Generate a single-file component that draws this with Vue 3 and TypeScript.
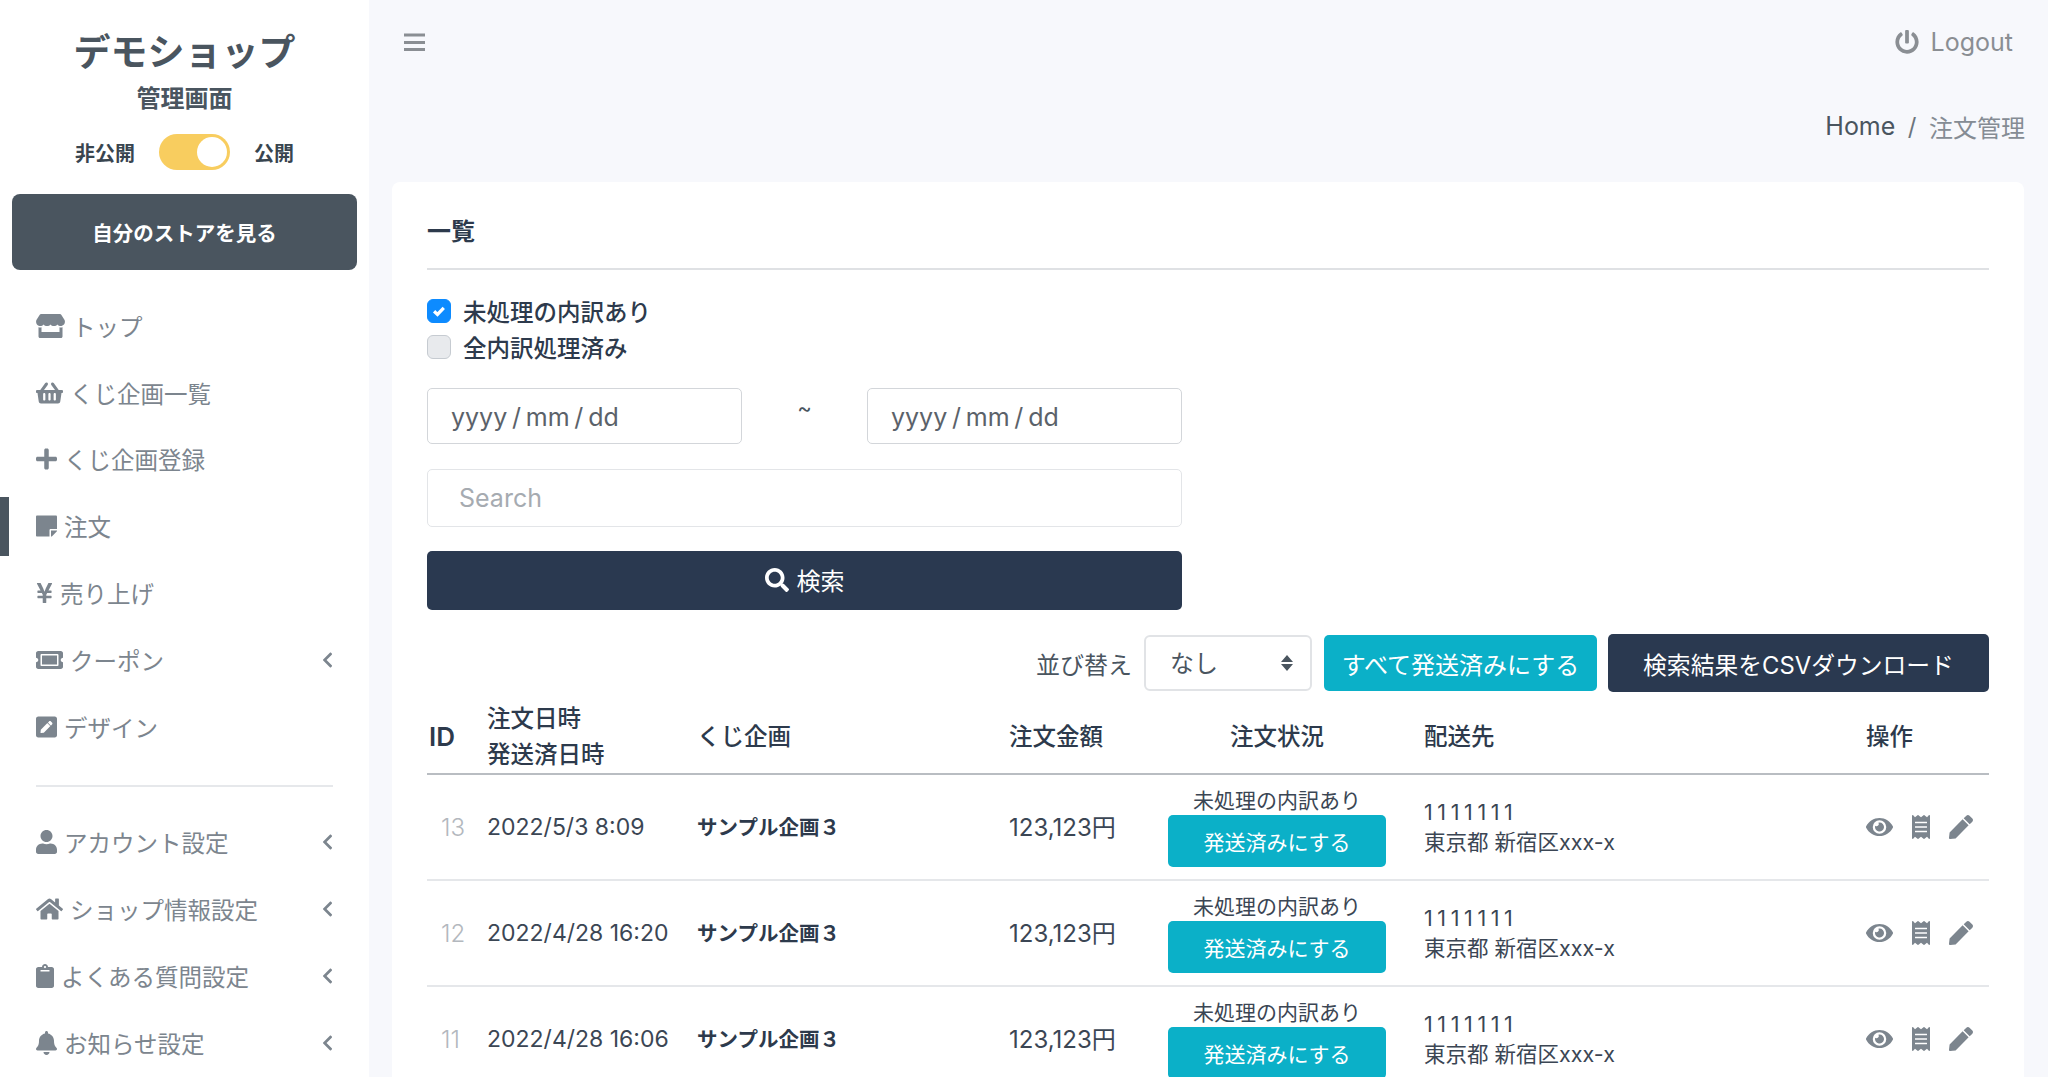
<script setup lang="ts">
interface Icon { vb: string; d: string; w: number }
const ic: Record<string, Icon> = {
  store: { vb: '0 0 616 512', w: 29, d: 'M602 118.6L537.1 15C531.3 5.7 521 0 510 0H106C95 0 84.7 5.7 78.9 15L14 118.6c-33.5 53.5-3.8 127.9 58.8 136.4 4.5.6 9.1.9 13.7.9 29.6 0 55.8-13 73.8-33.1 18 20.1 44.3 33.1 73.8 33.1 29.6 0 55.8-13 73.8-33.1 18 20.1 44.3 33.1 73.8 33.1 29.6 0 55.8-13 73.8-33.1 18.1 20.1 44.3 33.1 73.8 33.1 4.7 0 9.2-.3 13.7-.9 62.8-8.4 92.6-82.8 59-136.4zM529.5 288c-10 0-19.9-1.5-29.5-3.8V384H116v-99.8c-9.6 2.2-19.5 3.8-29.5 3.8-6 0-12.1-.4-18-1.2-5.6-.8-11.1-2.1-16.4-3.6V480c0 17.7 14.3 32 32 32h448c17.7 0 32-14.3 32-32V283.2c-5.4 1.6-10.8 2.9-16.4 3.6-6.1.8-12.1 1.2-18.2 1.2z' },
  basket: { vb: '0 0 576 512', w: 27, d: 'M576 216v16c0 13.255-10.745 24-24 24h-8l-26.113 182.788C514.509 462.435 494.257 480 470.37 480H105.63c-23.887 0-44.139-17.565-47.518-41.212L32 256h-8c-13.255 0-24-10.745-24-24v-16c0-13.255 10.745-24 24-24h67.341l106.78-146.821c10.395-14.292 30.407-17.453 44.701-7.058 14.293 10.395 17.453 30.408 7.058 44.701L170.477 192h235.046L326.12 82.821c-10.395-14.292-7.234-34.306 7.059-44.701 14.291-10.395 34.306-7.235 44.701 7.058L484.659 192H552c13.255 0 24 10.745 24 24zM312 392V280c0-13.255-10.745-24-24-24s-24 10.745-24 24v112c0 13.255 10.745 24 24 24s24-10.745 24-24zm112 0V280c0-13.255-10.745-24-24-24s-24 10.745-24 24v112c0 13.255 10.745 24 24 24s24-10.745 24-24zm-224 0V280c0-13.255-10.745-24-24-24s-24 10.745-24 24v112c0 13.255 10.745 24 24 24s24-10.745 24-24z' },
  plus: { vb: '0 0 448 512', w: 21, d: 'M416 208H272V64c0-17.67-14.33-32-32-32h-32c-17.67 0-32 14.33-32 32v144H32c-17.67 0-32 14.33-32 32v32c0 17.67 14.33 32 32 32h144v144c0 17.67 14.33 32 32 32h32c17.67 0 32-14.33 32-32V304h144c17.67 0 32-14.33 32-32v-32c0-17.67-14.33-32-32-32z' },
  note: { vb: '0 0 448 512', w: 21, d: 'M312 320h136V56c0-13.3-10.7-24-24-24H24C10.7 32 0 42.7 0 56v400c0 13.3 10.7 24 24 24h264V344c0-13.2 10.8-24 24-24zm129 55l-98 98c-4.5 4.5-10.6 7-17 7h-6V352h128v6.1c0 6.3-2.5 12.4-7 16.9z' },
  yen: { vb: '0 0 384 512', w: 17, d: 'M351.2 32h-65.3c-4.6 0-8.8 2.6-10.8 6.7l-55.4 113.2c-14.5 34.7-27.1 71.9-27.1 71.9h-1.3s-12.6-37.2-27.1-71.9L108.8 38.7c-2-4.1-6.2-6.7-10.8-6.7H32.8c-9.1 0-14.8 9.7-10.6 17.6L102.3 200H44c-6.6 0-12 5.4-12 12v32c0 6.6 5.4 12 12 12h88.2l19.8 37.2V320H44c-6.6 0-12 5.4-12 12v32c0 6.6 5.4 12 12 12h108v92c0 6.6 5.4 12 12 12h56c6.6 0 12-5.4 12-12v-92h108c6.6 0 12-5.4 12-12v-32c0-6.6-5.4-12-12-12H232v-26.8l19.8-37.2H340c6.6 0 12-5.4 12-12v-32c0-6.6-5.4-12-12-12h-58.3l80.1-150.4c4.2-7.9-1.5-17.6-10.6-17.6z' },
  ticket: { vb: '0 0 576 512', w: 27, d: 'M128 160h320v192H128V160zm400 96c0 26.51 21.49 48 48 48v96c0 26.51-21.49 48-48 48H48c-26.51 0-48-21.49-48-48v-96c26.51 0 48-21.49 48-48s-21.49-48-48-48v-96c0-26.51 21.49-48 48-48h480c26.51 0 48 21.49 48 48v96c-26.51 0-48 21.49-48 48zm-48-104c0-13.255-10.745-24-24-24H120c-13.255 0-24 10.745-24 24v208c0 13.255 10.745 24 24 24h336c13.255 0 24-10.745 24-24V152z' },
  pensq: { vb: '0 0 448 512', w: 21, d: 'M400 480H48c-26.5 0-48-21.5-48-48V80c0-26.5 21.5-48 48-48h352c26.5 0 48 21.5 48 48v352c0 26.5-21.5 48-48 48zM238.1 177.9L102.4 313.6l-6.3 57.1c-.8 7.6 5.6 14.1 13.3 13.3l57.1-6.3L302.2 242c2.3-2.3 2.3-6.1 0-8.5L246.7 178c-2.5-2.4-6.3-2.4-8.6-.1zM345 165.1L314.9 135c-9.4-9.4-24.6-9.4-33.9 0l-23.1 23.1c-2.3 2.3-2.3 6.1 0 8.5l55.5 55.5c2.3 2.3 6.1 2.3 8.5 0L345 199c9.3-9.3 9.3-24.5 0-33.9z' },
  user: { vb: '0 0 448 512', w: 21, d: 'M224 256c70.7 0 128-57.3 128-128S294.7 0 224 0 96 57.3 96 128s57.3 128 128 128zm89.6 32h-16.7c-22.2 10.2-46.9 16-72.9 16s-50.6-5.8-72.9-16h-16.7C60.2 288 0 348.2 0 422.4V464c0 26.5 21.5 48 48 48h352c26.5 0 48-21.5 48-48v-41.6c0-74.2-60.2-134.4-134.4-134.4z' },
  home: { vb: '0 0 576 512', w: 27, d: 'M280.37 148.26L96 300.11V464a16 16 0 0 0 16 16l112.06-.29a16 16 0 0 0 15.92-16V368a16 16 0 0 1 16-16h64a16 16 0 0 1 16 16v95.64a16 16 0 0 0 16 16.05L464 480a16 16 0 0 0 16-16V300L295.67 148.26a12.19 12.19 0 0 0-15.3 0zM571.6 251.47L488 182.56V44.05a12 12 0 0 0-12-12h-56a12 12 0 0 0-12 12v72.61L318.47 43a48 48 0 0 0-61 0L4.34 251.47a12 12 0 0 0-1.6 16.9l25.5 31A12 12 0 0 0 45.15 301l235.22-193.74a12.19 12.19 0 0 1 15.3 0L530.9 301a12 12 0 0 0 16.9-1.6l25.5-31a12 12 0 0 0-1.7-16.93z' },
  clip: { vb: '0 0 384 512', w: 18, d: 'M384 112v352c0 26.51-21.49 48-48 48H48c-26.51 0-48-21.49-48-48V112c0-26.51 21.49-48 48-48h80c0-35.29 28.71-64 64-64s64 28.71 64 64h80c26.51 0 48 21.49 48 48zM192 40c-13.255 0-24 10.745-24 24s10.745 24 24 24 24-10.745 24-24-10.745-24-24-24m96 114v-20a6 6 0 0 0-6-6H102a6 6 0 0 0-6 6v20a6 6 0 0 0 6 6h180a6 6 0 0 0 6-6z' },
  bell: { vb: '0 0 448 512', w: 21, d: 'M224 512c35.32 0 63.97-28.65 63.97-64H160.03c0 35.35 28.65 64 63.97 64zm215.39-149.71c-19.32-20.76-55.47-51.99-55.47-154.29 0-77.7-54.48-139.9-127.94-155.16V32c0-17.67-14.32-32-31.98-32s-31.98 14.33-31.98 32v20.84C118.56 68.1 64.08 130.3 64.08 208c0 102.3-36.15 133.53-55.47 154.29-6 6.45-8.66 14.16-8.61 21.71.11 16.4 12.98 32 32.1 32h383.8c19.12 0 32-15.6 32.1-32 .05-7.55-2.61-15.27-8.61-21.71z' },
}
const chevron = 'M34.52 239.03L228.87 44.69c9.37-9.37 24.57-9.37 33.94 0l22.67 22.67c9.36 9.36 9.37 24.52.04 33.9L131.49 256l154.02 154.75c9.34 9.38 9.32 24.54-.04 33.9l-22.67 22.67c-9.37 9.37-24.57 9.37-33.94 0L34.52 272.97c-9.37-9.37-9.37-24.57 0-33.94z'
const eye = 'M572.52 241.4C518.29 135.59 410.93 64 288 64S57.68 135.64 3.48 241.41a32.35 32.35 0 0 0 0 29.19C57.71 376.41 165.07 448 288 448s230.32-71.64 284.52-177.41a32.35 32.35 0 0 0 0-29.19zM288 400a144 144 0 1 1 144-144 143.93 143.93 0 0 1-144 144zm0-240a95.31 95.31 0 0 0-25.31 3.79 47.85 47.85 0 0 1-66.9 66.9A95.78 95.78 0 1 0 288 160z'
const receipt = 'M358.4 3.2L320 48 265.6 3.2a15.9 15.9 0 0 0-19.2 0L192 48 137.6 3.2a15.9 15.9 0 0 0-19.2 0L64 48 25.6 3.2C15-4.7 0 2.8 0 16v480c0 13.2 15 20.7 25.6 12.8L64 464l54.4 44.8a15.9 15.9 0 0 0 19.2 0L192 464l54.4 44.8a15.9 15.9 0 0 0 19.2 0L320 464l38.4 44.8c10.5 7.9 25.6.4 25.6-12.8V16c0-13.2-15-20.7-25.6-12.8zM320 360c0 4.4-3.6 8-8 8H72c-4.4 0-8-3.6-8-8v-16c0-4.4 3.6-8 8-8h240c4.4 0 8 3.6 8 8v16zm0-96c0 4.4-3.6 8-8 8H72c-4.4 0-8-3.6-8-8v-16c0-4.4 3.6-8 8-8h240c4.4 0 8 3.6 8 8v16zm0-96c0 4.4-3.6 8-8 8H72c-4.4 0-8-3.6-8-8v-16c0-4.4 3.6-8 8-8h240c4.4 0 8 3.6 8 8v16z'
const pen = 'M290.74 93.24l128.02 128.02-277.99 277.99-114.14 12.6C11.35 513.54-1.56 500.62.14 485.34l12.7-114.22 277.9-278.88zm207.2-19.06l-60.11-60.11c-18.75-18.75-49.16-18.75-67.91 0l-56.55 56.55 128.02 128.02 56.55-56.55c18.75-18.76 18.75-49.16 0-67.91z'
const search = 'M505 442.7L405.3 343c-4.5-4.5-10.6-7-17-7H372c27.6-35.3 44-79.7 44-128C416 93.1 322.9 0 208 0S0 93.1 0 208s93.1 208 208 208c48.3 0 92.7-16.4 128-44v16.3c0 6.4 2.5 12.5 7 17l99.7 99.7c9.4 9.4 24.6 9.4 33.9 0l28.3-28.3c9.4-9.4 9.4-24.6.1-34zM208 336c-70.7 0-128-57.2-128-128 0-70.7 57.2-128 128-128 70.7 0 128 57.2 128 128 0 70.7-57.2 128-128 128z'
const power = 'M400 54.1c63 45 104 118.6 104 201.9 0 136.8-110.8 247.7-247.5 248C120 504.3 8.2 393 8 256.4 7.9 173.1 48.9 99.3 111.8 54.2c11.7-8.3 28-4.8 35 7.7L162.6 90c5.9 10.5 3.1 23.8-6.6 31-41.5 30.8-68 79.6-68 134.9-.1 92.3 74.5 168.1 168 168.1 91.6 0 168.6-74.2 168-169.1-.3-51.8-24.7-101.8-68.1-134-9.7-7.2-12.4-20.5-6.5-30.9l15.8-28.1c7-12.4 23.2-16.1 34.8-7.8zM296 264V24c0-13.3-10.7-24-24-24h-32c-13.3 0-24 10.7-24 24v240c0 13.3 10.7 24 24 24h32c13.3 0 24-10.7 24-24z'

const nav1 = [
  { icon: 'store', label: 'トップ' },
  { icon: 'basket', label: 'くじ企画一覧' },
  { icon: 'plus', label: 'くじ企画登録' },
  { icon: 'note', label: '注文', active: true },
  { icon: 'yen', label: '売り上げ' },
  { icon: 'ticket', label: 'クーポン', more: true },
  { icon: 'pensq', label: 'デザイン' },
]
const nav2 = [
  { icon: 'user', label: 'アカウント設定', more: true },
  { icon: 'home', label: 'ショップ情報設定', more: true },
  { icon: 'clip', label: 'よくある質問設定', more: true },
  { icon: 'bell', label: 'お知らせ設定', more: true },
]
const orders = [
  { id: 13, date: '2022/5/3 8:09' },
  { id: 12, date: '2022/4/28 16:20' },
  { id: 11, date: '2022/4/28 16:06' },
]
</script>

<template>
  <div class="app">
    <aside class="side">
      <div class="brand">デモショップ</div>
      <div class="sub">管理画面</div>
      <div class="pub">
        <span>非公開</span>
        <span class="toggle"><i></i></span>
        <span>公開</span>
      </div>
      <a class="store">自分のストアを見る</a>
      <nav class="nav first">
        <a v-for="n in nav1" :key="n.label" class="item" :class="{ active: n.active }">
          <svg class="ni" :viewBox="ic[n.icon].vb" :width="ic[n.icon].w" height="24"><path :d="ic[n.icon].d" /></svg>
          <span class="lb">{{ n.label }}</span>
          <svg v-if="n.more" class="chev" viewBox="0 0 320 512" width="11" height="18"><path :d="chevron" /></svg>
        </a>
      </nav>
      <hr class="div" />
      <nav class="nav">
        <a v-for="n in nav2" :key="n.label" class="item">
          <svg class="ni" :viewBox="ic[n.icon].vb" :width="ic[n.icon].w" height="24"><path :d="ic[n.icon].d" /></svg>
          <span class="lb">{{ n.label }}</span>
          <svg class="chev" viewBox="0 0 320 512" width="11" height="18"><path :d="chevron" /></svg>
        </a>
      </nav>
    </aside>

    <main class="main">
      <header class="top">
        <svg class="burger" viewBox="0 0 21 18" width="21" height="18"><path d="M0 2h21M0 9.5h21M0 16.5h21" /></svg>
        <a class="logout">
          <svg viewBox="0 0 512 512" width="24" height="24"><path :d="power" /></svg>
          <span>Logout</span>
        </a>
      </header>
      <div class="crumb"><span class="home">Home</span><span class="sl">/</span><span class="cur">注文管理</span></div>

      <section class="card">
        <h2 class="title">一覧</h2>
        <label class="chk"><span class="box on"><svg viewBox="0 0 12 12" width="14" height="14"><path d="M1.8 6.2l2.9 2.7 5.4-5.6" /></svg></span>未処理の内訳あり</label>
        <label class="chk two"><span class="box"></span>全内訳処理済み</label>
        <div class="dates">
          <input class="inp" placeholder="yyyy / mm / dd" />
          <span class="tilde">~</span>
          <input class="inp" placeholder="yyyy / mm / dd" />
        </div>
        <input class="search" placeholder="Search" />
        <button class="go">
          <svg viewBox="0 0 512 512" width="24" height="24"><path :d="search" /></svg>
          検索
        </button>
        <div class="tools">
          <span class="sortl">並び替え</span>
          <div class="sel">
            <select><option>なし</option></select>
            <svg viewBox="0 0 12 16" width="12" height="16"><path d="M6 0l6 7H0zM6 16L0 9h12z" /></svg>
          </div>
          <button class="teal">すべて発送済みにする</button>
          <button class="navy">検索結果をCSVダウンロード</button>
        </div>
        <table class="tbl">
          <colgroup>
            <col class="c1" /><col class="c2" /><col class="c3" /><col class="c4" /><col class="c5" /><col class="c6" /><col class="c7" />
          </colgroup>
          <thead>
            <tr>
              <th>ID</th>
              <th>注文日時<br />発送済日時</th>
              <th>くじ企画</th>
              <th>注文金額</th>
              <th class="ctr">注文状況</th>
              <th class="addrh">配送先</th>
              <th>操作</th>
            </tr>
          </thead>
          <tbody>
            <tr v-for="o in orders" :key="o.id">
              <td class="idc">{{ o.id }}</td>
              <td class="dt">{{ o.date }}</td>
              <td class="kuji">サンプル企画３</td>
              <td class="amt">123,123円</td>
              <td class="ctr status">
                <div class="st">未処理の内訳あり</div>
                <button class="ship">発送済みにする</button>
              </td>
              <td class="addr">
                <div class="zip">1111111</div>
                <div>東京都 新宿区xxx-x</div>
              </td>
              <td>
                <div class="ops">
                  <svg viewBox="0 0 576 512" width="27" height="24"><path :d="eye" /></svg>
                  <svg viewBox="0 0 384 512" width="18" height="24"><path :d="receipt" /></svg>
                  <svg viewBox="0 0 512 512" width="24" height="24"><path :d="pen" /></svg>
                </div>
              </td>
            </tr>
          </tbody>
        </table>
      </section>
    </main>
  </div>
</template>

<style>
html, body { margin: 0; padding: 0; }
</style>

<style scoped>
.app {
  display: flex;
  height: 1077px;
  overflow: hidden;
  background: #f7f8fc;
  font-family: Inter, "Noto Sans CJK JP", sans-serif;
  color: #2d3a4c;
}
.side {
  width: 369px;
  flex: none;
  background: #fff;
  box-sizing: border-box;
  padding-top: 26px;
  overflow: hidden;
}
.brand { text-align: center; font-size: 37px; line-height: 54px; font-weight: 700; color: #4a555f; }
.sub { text-align: center; font-size: 24px; line-height: 34px; margin-top: 2px; font-weight: 700; color: #4a555f; }
.pub {
  display: flex; align-items: center; justify-content: center;
  gap: 24px; margin-top: 18px; font-size: 20px; font-weight: 700; color: #39454f; height: 36px;
}
.toggle { width: 71px; height: 36px; border-radius: 18px; background: #f8cd5f; position: relative; display: block; }
.toggle i { position: absolute; right: 3px; top: 3px; width: 30px; height: 30px; border-radius: 50%; background: #fff; }
.store {
  display: flex; align-items: center; justify-content: center;
  margin: 24px 12px 0 12px; height: 76px; border-radius: 8px; background: #4a555f; color: #fff;
  font-size: 20.5px; font-weight: 700;
}
.nav { display: flex; flex-direction: column; }
.nav.first { margin-top: 22.5px; }
.item {
  position: relative; display: flex; align-items: center; gap: 7px; height: 66.8px;
  padding: 0 36px; font-size: 23.5px; color: #7c858e;
}
.item.active::before {
  content: ""; position: absolute; left: 0; top: 4.5px; width: 9px; height: 59px; background: #4a555f;
}
.ni { fill: #7c858e; flex: none; }
.lb { flex: 1; white-space: nowrap; }
.chev { fill: #7c858e; flex: none; }
.div { border: 0; border-top: 2px solid #e6e8eb; margin: 25px 36px 22px; }

.main { flex: 1; min-width: 0; box-sizing: border-box; padding: 0 24px 0 23px; }
.top { display: flex; align-items: center; justify-content: space-between; height: 84px; padding: 0 11px 0 12px; }
.burger { stroke: #8a8e93; stroke-width: 3.2; fill: none; }
.logout { display: flex; align-items: center; gap: 12px; font-size: 25px; color: #8a8e93; font-weight: 400; }
.logout svg { fill: #8a8e93; }
.crumb { display: flex; justify-content: flex-end; align-items: center; gap: 12.5px; height: 84px; margin-right: -1px; font-size: 24px; }
.home { color: #4a555f; font-size: 25px; }
.sl { color: #6c757d; }
.cur { color: #858c94; }
.card {
  background: #fff; border-radius: 8px; box-sizing: border-box; padding: 0 35px; margin-top: 14px; height: 1100px;
}
.title {
  margin: 0; height: 88px; border-bottom: 2px solid #dfe1e4; box-sizing: border-box; font-size: 24px; font-weight: 700;
  display: flex; align-items: center; padding-top: 9px; color: #2d3a4c;
}
.chk { display: flex; align-items: center; gap: 12px; font-size: 23.5px; font-weight: 500; height: 36px; margin-top: 23px; }
.chk.two { margin-top: 0; }
.box { width: 24px; height: 24px; border-radius: 6px; background: #e8eaed; border: 1.5px solid #c6cbd1; box-sizing: border-box; display: flex; align-items: center; justify-content: center; }
.box.on { background: #0d8bff; border-color: #0d8bff; }
.box svg { fill: none; stroke: #fff; stroke-width: 2.8; }
.dates { display: flex; align-items: center; width: 755px; justify-content: space-between; margin-top: 23px; }
.inp {
  width: 315px; height: 56px; box-sizing: border-box; border: 1px solid #d3d6da; border-radius: 5px;
  padding: 1px 23px 0; font: inherit; font-size: 25px; word-spacing: -2.25px; outline: none; background: #fff;
}
.inp::placeholder { color: #5b626a; opacity: 1; }
.tilde { font-size: 22px; color: #4a555f; margin-top: -16px; }
.search {
  display: block; width: 755px; height: 58px; box-sizing: border-box; margin-top: 25px; border: 1px solid #e3e5e8; border-radius: 5px;
  padding: 0 31px; font: inherit; font-size: 25px; outline: none;
}
.search::placeholder { color: #a6abb1; opacity: 1; }
.go {
  display: flex; align-items: center; justify-content: center; gap: 8px; width: 755px; height: 59px; margin-top: 24px; padding: 0 0 2px;
  border: 0; border-radius: 5px; background: #2a3950; color: #fff; font: inherit; font-size: 24px;
}
.go svg { fill: #fff; }
.tools { display: flex; align-items: center; justify-content: flex-end; margin-top: 24px; height: 58px; }
.sortl { font-size: 24px; color: #4a555f; margin-right: 12px; }
.sel { position: relative; width: 168px; height: 56px; margin-right: 12px; }
.sel select {
  appearance: none; width: 100%; height: 100%; box-sizing: border-box; border: 2px solid #e1e3e6; border-radius: 6px;
  padding: 0 24px; font: inherit; font-size: 24px; color: #4a555f; background: #fff; outline: none;
}
.sel svg { position: absolute; right: 19px; top: 20px; fill: #4a555f; }
.teal, .navy, .ship { border: 0; color: #fff; font: inherit; padding: 0; }
.teal { width: 273px; height: 56px; background: #0bb0c8; border-radius: 5px; font-size: 24px; margin-right: 11px; }
.navy { width: 381px; height: 58px; background: #2a3950; border-radius: 5px; font-size: 23.8px; }
.tbl { width: 100%; border-collapse: collapse; table-layout: fixed; margin-top: 6px; }
.c1 { width: 60px; } .c2 { width: 210px; } .c3 { width: 312px; } .c4 { width: 159px; } .c5 { width: 218px; } .c6 { width: 480px; } .c7 { width: 123px; }
.tbl th { font-size: 23.5px; font-weight: 500; text-align: left; line-height: 36px; padding: 3px 0 0; height: 72px; box-sizing: border-box; border-bottom: 2px solid #b9bdc2; vertical-align: middle; color: #2d3a4c; }
.tbl th:first-child { padding-left: 2px; font-size: 26px; font-weight: 600; }
.tbl th.ctr, .tbl td.ctr { text-align: center; }
.tbl th.addrh, .tbl td.addr { padding-left: 38px; }
.tbl td { height: 106px; box-sizing: border-box; padding: 0; border-bottom: 2px solid #e5e7ea; font-size: 23px; color: #3b4654; vertical-align: middle; }
.tbl td.idc { padding-left: 14px; color: #b3b8be; font-size: 24px; font-weight: 300; }
.tbl td.amt { font-size: 24px; font-weight: 400; padding-bottom: 3px; }
.tbl td.kuji { font-weight: 700; font-size: 20.5px; color: #2d3a4c; padding-bottom: 2px; }
.status .st { font-size: 21px; line-height: 28px; }
.ship { width: 218px; height: 52px; background: #0bb0c8; border-radius: 5px; font-size: 21px; display: block; }
.tbl td.addr { font-size: 21.5px; line-height: 30px; }
.zip { letter-spacing: 4.6px; }
.ops { display: flex; align-items: center; gap: 19px; }
.ops svg { fill: #7c858e; flex: none; }
</style>
